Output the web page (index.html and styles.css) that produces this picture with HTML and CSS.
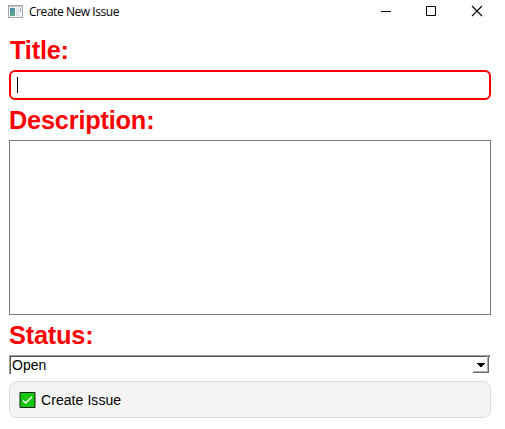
FILE: index.html
```html
<!DOCTYPE html>
<html lang="en">
<head>
<meta charset="utf-8">
<title>Create New Issue</title>
<link rel="stylesheet" href="styles.css">
</head>
<body>
<header class="titlebar">
  <svg class="app-icon" width="15" height="13" viewBox="0 0 15 13" shape-rendering="crispEdges">
    <defs><linearGradient id="g" x1="0" y1="0" x2="0.5" y2="1"><stop offset="0" stop-color="#4a86ae"/><stop offset="1" stop-color="#5fa888"/></linearGradient></defs>
    <path fill="#a5a9ae" d="M0 0h15v13H0z"/>
    <path fill="#f3f4f6" d="M1 2h13v10H1z"/>
    <path fill="#c3c7cd" d="M1 1h13v1H1z"/>
    <path fill="url(#g)" d="M2 3h5v8H2z"/>
    <path fill="#dfe2e6" d="M8 3h3v8H8z"/>
    <path fill="#8fb4b8" d="M12 3h1v4h-1z"/>
  </svg>
  <h1 class="caption">Create New Issue</h1>
  <div class="controls">
    <svg width="45" height="22" viewBox="0 0 45 22"><path d="M17 11.5h10" stroke="#000"/></svg>
    <svg width="45" height="22" viewBox="0 0 45 22"><path d="M17.500 6.500h9v9h-9z" fill="none" stroke="#000"/></svg>
    <svg width="45" height="22" viewBox="0 0 45 22"><path d="M18 6l10 10M28 6L18 16" stroke="#000" stroke-width="1.100"/></svg>
  </div>
</header>
<main class="form">
  <div class="label label-title">Title:</div>
  <div class="text-input"><span class="caret"></span></div>
  <div class="label">Description:</div>
  <div class="text-area"></div>
  <div class="label">Status:</div>
  <div class="select">
    <span class="value">Open</span>
    <span class="drop"><svg width="8" height="4" viewBox="0 0 8 4" shape-rendering="crispEdges"><path d="M0 0h8v1H0zM1 1h6v1H1zM2 2h4v1H2zM3 3h2v1H3z"/></svg></span>
  </div>
  <div class="button">
    <svg width="17" height="16" viewBox="0 0 17 16"><path d="M1 .5h15v15H1z" fill="#16c60c" stroke="#12200f"/><path d="M4 8.500l2.700 2.500L13 4.700" fill="none" stroke="#fff" stroke-width="1.500"/></svg>
    <span>Create Issue</span>
  </div>
</main>
</body>
</html>
```

FILE: styles.css
```css
* { box-sizing: border-box; }
body {
  margin: 0;
  background: #fff;
  color: #000;
  font-family: "Liberation Sans", Arial, sans-serif;
  overflow: hidden;
}
.titlebar {
  display: flex;
  height: 35px;
  padding: 0 6px 0 8px;
}
.app-icon { margin-top: 5px; }
.caption {
  margin: 3px 0 0 6px;
  font: 400 12px/17px "Segoe UI", "Open Sans", sans-serif;
  letter-spacing: -0.44px;
  white-space: nowrap;
}
.controls { display: flex; margin-left: auto; }
.form {
  display: flex;
  flex-direction: column;
  padding: 0 14px 0 9px;
}
.label {
  height: 40px;
  color: #f00;
  font-size: 25.330px;
  font-weight: 700;
  letter-spacing: -0.2px;
  line-height: 40px;
}
.label-title { height: 35px; line-height: 31px; padding-left: 1px; }
.text-input {
  height: 30px;
  padding: 5px 6px;
  border: 2px solid #f00;
  border-radius: 6px;
}
.caret { display: block; width: 1px; height: 16px; background: #000; }
.text-area { height: 175px; border: 1px solid #7a7a7a; }
.select {
  display: flex;
  justify-content: space-between;
  height: 19px;
  margin-right: 1px;
  border-top: 1px solid #a0a0a0;
  border-left: 1px solid #a0a0a0;
  box-shadow: inset 1px 1px #555;
}
.value { padding-left: 2px; font-size: 14px; line-height: 18px; }
.drop {
  display: flex;
  justify-content: center;
  width: 16px;
  height: 17px;
  margin-right: 1px;
  padding-top: 7px;
  border-right: 1px solid #696969;
  border-bottom: 1px solid #696969;
  box-shadow: inset -1px -1px #b0b0b0;
}
.button {
  display: flex;
  align-items: center;
  gap: 5px;
  height: 37px;
  margin-top: 7px;
  padding-left: 9px;
  border: 1px solid #dcdcdc;
  border-radius: 8px;
  background: #f4f4f4;
  font-size: 14px;
  letter-spacing: 0.07px;
}
```
